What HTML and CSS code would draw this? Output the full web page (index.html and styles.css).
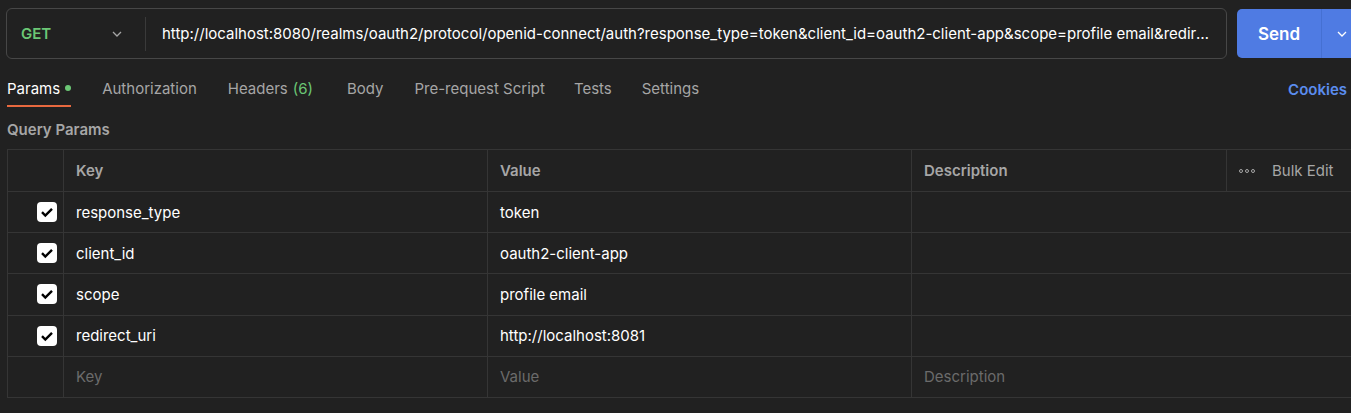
FILE: index.html
```html
<!DOCTYPE html>
<html>
<head>
<meta charset="utf-8">
<link rel="stylesheet" href="styles.css">
</head>
<body>
<div class="topbar">
  <div class="urlbox">
    <div class="method">
      <span class="get">GET</span>
      <svg class="chev" width="12" height="12" viewBox="0 0 12 12"><path d="M2 4l4 4 4-4" fill="none" stroke="#a6a6a6" stroke-width="1.3"/></svg>
    </div>
    <div class="url">http://localhost:8080/realms/oauth2/protocol/openid-connect/auth?response_type=token&amp;client_id=oauth2-client-app&amp;scope=profile email&amp;redirect_uri=http://localhost:8081</div>
  </div>
  <div class="send">
    <span class="send-label">Send</span>
    <span class="send-drop"><svg width="12" height="12" viewBox="0 0 12 12"><path d="M2 4l4 4 4-4" fill="none" stroke="#ffffff" stroke-width="1.3"/></svg></span>
  </div>
</div>
<div class="tabs">
  <div class="tab active">Params <span class="dot"></span></div>
  <div class="tab">Authorization</div>
  <div class="tab">Headers <span class="green">(6)</span></div>
  <div class="tab">Body</div>
  <div class="tab">Pre-request Script</div>
  <div class="tab">Tests</div>
  <div class="tab">Settings</div>
  <div class="cookies">Cookies</div>
</div>
<div class="section-title">Query Params</div>
<div class="table">
  <div class="row head">
    <div class="cell chk"></div>
    <div class="cell">Key</div>
    <div class="cell">Value</div>
    <div class="cell">Description</div>
    <div class="cell bulk"><span class="dots"><i></i><i></i><i></i></span><span class="bulk-label">Bulk Edit</span></div>
  </div>
  <div class="row">
    <div class="cell chk"><span class="box"><svg width="20" height="20" viewBox="0 0 20 20"><path d="M5 10.2l3.3 3.3L15 6.8" fill="none" stroke="#000" stroke-width="2.4"/></svg></span></div>
    <div class="cell">response_type</div>
    <div class="cell">token</div>
    <div class="cell desc"></div>
  </div>
  <div class="row">
    <div class="cell chk"><span class="box"><svg width="20" height="20" viewBox="0 0 20 20"><path d="M5 10.2l3.3 3.3L15 6.8" fill="none" stroke="#000" stroke-width="2.4"/></svg></span></div>
    <div class="cell">client_id</div>
    <div class="cell">oauth2-client-app</div>
    <div class="cell desc"></div>
  </div>
  <div class="row">
    <div class="cell chk"><span class="box"><svg width="20" height="20" viewBox="0 0 20 20"><path d="M5 10.2l3.3 3.3L15 6.8" fill="none" stroke="#000" stroke-width="2.4"/></svg></span></div>
    <div class="cell">scope</div>
    <div class="cell">profile email</div>
    <div class="cell desc"></div>
  </div>
  <div class="row">
    <div class="cell chk"><span class="box"><svg width="20" height="20" viewBox="0 0 20 20"><path d="M5 10.2l3.3 3.3L15 6.8" fill="none" stroke="#000" stroke-width="2.4"/></svg></span></div>
    <div class="cell">redirect_uri</div>
    <div class="cell">http://localhost:8081</div>
    <div class="cell desc"></div>
  </div>
  <div class="row">
    <div class="cell chk"></div>
    <div class="cell ph">Key</div>
    <div class="cell ph">Value</div>
    <div class="cell desc ph">Description</div>
  </div>
</div>
</body>
</html>
```
FILE: styles.css
```css
* { box-sizing: border-box; }
html, body { margin: 0; padding: 0; }
body {
  background: #212121;
  font-family: Inter, "Noto Sans", sans-serif;
  font-size: 15px;
  color: #ffffff;
  width: 1351px;
  height: 413px;
  overflow: hidden;
}
.topbar {
  display: flex;
  gap: 10px;
  padding: 8px 0 0 6px;
  width: 1351px;
  overflow: hidden;
}
.urlbox {
  flex: 0 0 1221px;
  width: 1221px;
  min-width: 0;
  height: 51px;
  border: 1px solid #474747;
  border-radius: 6px;
  display: flex;
  align-items: center;
}
.method {
  flex: 0 0 139px;
  height: 34px;
  display: flex;
  align-items: center;
  justify-content: space-between;
  padding: 0 22px 0 14px;
  border-right: 1px solid #3a3a3a;
}
.get { color: #6bc775; font-weight: 600; font-size: 15px; }
.chev { display: block; }
.url {
  flex: 1 1 0;
  min-width: 0;
  padding: 0 9px 0 16px;
  white-space: nowrap;
  overflow: hidden;
  text-overflow: ellipsis;
  color: #ffffff;
  font-size: 15px;
}
.send {
  flex: 0 0 130px;
  height: 49px;
  margin-top: 1px;
  background: #4f7be3;
  border-radius: 5px;
  display: flex;
  align-items: center;
}
.send-label {
  width: 84px;
  text-align: center;
  font-weight: 600;
  font-size: 17px;
  color: #fff;
}
.send-drop {
  height: 100%;
  border-left: 1px solid #4570d2;
  display: flex;
  align-items: center;
  padding-left: 14px;
}
.tabs {
  display: flex;
  align-items: stretch;
  height: 38px;
  padding: 0 4px 0 7px;
  margin-top: 10px;
}
.tab {
  color: #a6a6a6;
  margin-right: 31px;
  display: flex;
  align-items: center;
  height: 38px;
  padding-top: 2px;
  border-bottom: 2px solid transparent;
}
.tab:nth-child(3) { margin-right: 34px; }
.tab:nth-child(5) { margin-right: 29px; }
.tab:nth-child(6) { margin-right: 30px; }
.tab.active {
  color: #ffffff;
  border-bottom-color: #e8693f;
}
.dot {
  display: inline-block;
  width: 6px;
  height: 6px;
  border-radius: 50%;
  background: #6bc775;
  margin-left: 5px;
}
.green { color: #6bc775; margin-left: 5px; }
.cookies {
  margin-left: auto;
  color: #5b8def;
  font-weight: 600;
  height: 38px;
  padding-top: 2px;
  display: flex;
  align-items: center;
}
.section-title {
  color: #a6a6a6;
  font-weight: 600;
  font-size: 15px;
  line-height: 20px;
  padding-left: 7px;
  margin-top: 13px;
}
.table {
  margin: 9px 0 0 7px;
  width: 1360px;
  border-top: 1px solid #353535;
  border-left: 1px solid #353535;
}
.row {
  display: grid;
  grid-template-columns: 56px 424px 424px 315px 1fr;
  height: 41.2px;
  border-bottom: 1px solid #353535;
}
.row.head { height: 42px; }
.cell {
  display: flex;
  align-items: center;
  padding-left: 12px;
  border-right: 1px solid #353535;
  white-space: nowrap;
}
.head .cell { color: #a6a6a6; font-weight: 600; }
.cell.desc { grid-column: span 2; }
.cell.chk { padding-left: 29px; }
.box {
  width: 20px;
  height: 20px;
  background: #ffffff;
  border-radius: 4px;
  display: flex;
  align-items: center;
  justify-content: center;
}
.ph { color: #6b6b6b; }
.head .cell.bulk { font-weight: 400; padding-left: 12px; }
.dots { display: flex; gap: 2px; margin-right: 17px; }
.dots i { width: 4px; height: 4px; border: 1px solid #a6a6a6; border-radius: 50%; display: block; }
.bulk-label { color: #a6a6a6; }
```
